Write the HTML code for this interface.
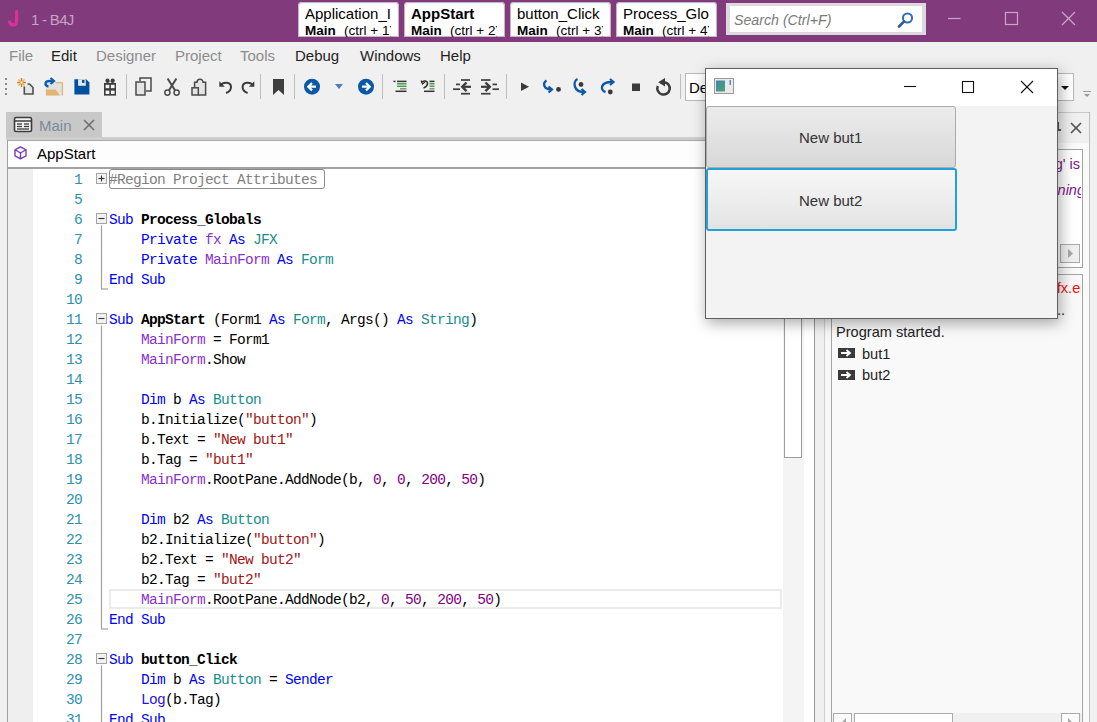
<!DOCTYPE html>
<html><head><meta charset="utf-8"><style>
html,body{margin:0;padding:0;}
body{width:1097px;height:722px;overflow:hidden;position:relative;background:#f0f0f0;font-family:'Liberation Sans', sans-serif;}
.b{position:absolute;}
.t{position:absolute;white-space:nowrap;}
</style></head><body>
<div class="b" style="left:0px;top:0px;width:1097px;height:42px;background:#813b7c;"></div><svg class="b" style="left:0;top:0" width="28" height="40"><path d="M16.6 11.5 V20.5 C16.6 26.2 10.8 26.2 9.6 22" fill="none" stroke="#dc2f9a" stroke-width="3.2" stroke-linecap="round"/></svg><div class="t" style="left:31px;top:10.30px;font-size:15px;line-height:19px;color:#c8a3c6;letter-spacing:-0.7px;">1 - B4J</div><div class="b" style="left:298px;top:2px;width:101px;height:35px;background:#fff;border-radius:4px 4px 1px 1px;box-shadow:inset 0 0 1px 1px #bdb0bd;overflow:hidden;"><div class="b" style="left:0;top:0;width:93px;height:36px;overflow:hidden;"><div class="t" style="left:7px;top:2.30px;font-size:15px;line-height:19px;color:#000;">Application_I</div><div class="t" style="left:7px;top:19.82px;font-size:13.5px;line-height:17px;color:#000;font-weight:bold;">Main</div><div class="t" style="left:46px;top:19.82px;font-size:13.5px;line-height:17px;color:#000;">(ctrl + 1)</div></div></div><div class="b" style="left:404px;top:2px;width:101px;height:35px;background:#fff;border-radius:4px 4px 1px 1px;box-shadow:inset 0 0 1px 1px #bdb0bd;overflow:hidden;"><div class="b" style="left:0;top:0;width:93px;height:36px;overflow:hidden;"><div class="t" style="left:7px;top:2.30px;font-size:15px;line-height:19px;color:#000;font-weight:bold;">AppStart</div><div class="t" style="left:7px;top:19.82px;font-size:13.5px;line-height:17px;color:#000;font-weight:bold;">Main</div><div class="t" style="left:46px;top:19.82px;font-size:13.5px;line-height:17px;color:#000;">(ctrl + 2)</div></div></div><div class="b" style="left:510px;top:2px;width:101px;height:35px;background:#fff;border-radius:4px 4px 1px 1px;box-shadow:inset 0 0 1px 1px #bdb0bd;overflow:hidden;"><div class="b" style="left:0;top:0;width:93px;height:36px;overflow:hidden;"><div class="t" style="left:7px;top:2.30px;font-size:15px;line-height:19px;color:#000;">button_Click</div><div class="t" style="left:7px;top:19.82px;font-size:13.5px;line-height:17px;color:#000;font-weight:bold;">Main</div><div class="t" style="left:46px;top:19.82px;font-size:13.5px;line-height:17px;color:#000;">(ctrl + 3)</div></div></div><div class="b" style="left:616px;top:2px;width:101px;height:35px;background:#fff;border-radius:4px 4px 1px 1px;box-shadow:inset 0 0 1px 1px #bdb0bd;overflow:hidden;"><div class="b" style="left:0;top:0;width:93px;height:36px;overflow:hidden;"><div class="t" style="left:7px;top:2.30px;font-size:15px;line-height:19px;color:#000;">Process_Glob</div><div class="t" style="left:7px;top:19.82px;font-size:13.5px;line-height:17px;color:#000;font-weight:bold;">Main</div><div class="t" style="left:46px;top:19.82px;font-size:13.5px;line-height:17px;color:#000;">(ctrl + 4)</div></div></div><div class="b" style="left:726px;top:3px;width:200px;height:32px;background:#dcd8e0;"></div><div class="b" style="left:730px;top:6px;width:192px;height:26px;background:#fff;"></div><div class="t" style="left:734px;top:11.08px;font-size:14.2px;line-height:18px;color:#7a7a7a;font-style:italic;">Search (Ctrl+F)</div><svg class="b" style="left:896px;top:11px" width="20" height="18" viewBox="0 0 20 18">
<circle cx="11.5" cy="7" r="4.6" fill="none" stroke="#2f6db5" stroke-width="2"/>
<line x1="8.2" y1="10.3" x2="3" y2="15.5" stroke="#2a5d9a" stroke-width="2.6" stroke-linecap="round"/></svg><svg class="b" style="left:940px;top:5px" width="157" height="30" viewBox="0 0 157 30">
<line x1="8" y1="13.5" x2="20.5" y2="13.5" stroke="#c9a5c8" stroke-width="1.2"/>
<rect x="65.5" y="7.5" width="12" height="12" fill="none" stroke="#c9a5c8" stroke-width="1.2"/>
<line x1="122" y1="7" x2="135" y2="20" stroke="#c9a5c8" stroke-width="1.2"/>
<line x1="135" y1="7" x2="122" y2="20" stroke="#c9a5c8" stroke-width="1.2"/>
</svg><div class="t" style="left:9px;top:46.30px;font-size:15px;line-height:19px;color:#8c8c8c;">File</div><div class="t" style="left:51px;top:46.30px;font-size:15px;line-height:19px;color:#1e1e1e;">Edit</div><div class="t" style="left:96px;top:46.30px;font-size:15px;line-height:19px;color:#8c8c8c;">Designer</div><div class="t" style="left:175px;top:46.30px;font-size:15px;line-height:19px;color:#8c8c8c;">Project</div><div class="t" style="left:240px;top:46.30px;font-size:15px;line-height:19px;color:#8c8c8c;">Tools</div><div class="t" style="left:295px;top:46.30px;font-size:15px;line-height:19px;color:#1e1e1e;">Debug</div><div class="t" style="left:360px;top:46.30px;font-size:15px;line-height:19px;color:#1e1e1e;">Windows</div><div class="t" style="left:440px;top:46.30px;font-size:15px;line-height:19px;color:#1e1e1e;">Help</div><svg class="b" style="left:0;top:0" width="720" height="106" viewBox="0 0 720 106"><rect x="5" y="78" width="2" height="2" fill="#8a8a8a"/><rect x="5" y="83" width="2" height="2" fill="#8a8a8a"/><rect x="5" y="88" width="2" height="2" fill="#8a8a8a"/><rect x="5" y="93" width="2" height="2" fill="#8a8a8a"/><g stroke="#d4861a" stroke-width="1.5"><line x1="21.5" y1="78" x2="21.5" y2="87"/><line x1="17" y1="82.5" x2="26" y2="82.5"/></g><g stroke="#e0a860" stroke-width="1.2"><line x1="18.5" y1="79.5" x2="24.5" y2="85.5"/><line x1="24.5" y1="79.5" x2="18.5" y2="85.5"/></g><circle cx="21.5" cy="82.5" r="1" fill="#fff"/><path d="M24.3 86.5 V94 H33 V87.5 L29.5 84 H27.5" fill="#e6e6e6" stroke="#505050" stroke-width="1.6"/><rect x="45.5" y="82.5" width="17" height="13" fill="#e2e2e2"/><path d="M55.5 82.6 H62.4 V95.5" fill="none" stroke="#e2b878" stroke-width="1.3"/><path d="M46 89.5 H55.5 L60 95.6 H46 Z" fill="#e3b56e"/><path d="M48.5 86.6 C44 85.5 44.5 81 50 81 H52.5" fill="none" stroke="#0a5cb0" stroke-width="2.3"/><path d="M50.5 78 L54 81 L50.5 84" fill="none" stroke="#0a5cb0" stroke-width="2.2"/><path d="M74.4 79.2 H86.2 L89.4 82.6 V94.4 H74.4 Z" fill="#0050a0"/><rect x="78.1" y="79.2" width="7.7" height="6.6" fill="#e6e6e6"/><rect x="82" y="80" width="2.5" height="2.9" fill="#0050a0"/><rect x="104" y="83" width="12" height="12.6" fill="#3c3c3c"/><g fill="#f4f4f4"><rect x="105.6" y="84.8" width="3.7" height="3.4"/><rect x="110.9" y="84.8" width="3.7" height="3.4"/><rect x="105.6" y="90.6" width="3.7" height="3.4"/><rect x="110.9" y="90.6" width="3.7" height="3.4"/></g><circle cx="107.6" cy="80.7" r="2.2" fill="#3c3c3c"/><circle cx="112.6" cy="80.7" r="2.2" fill="#3c3c3c"/><circle cx="110.1" cy="79.5" r="0.9" fill="#f0f0f0"/><line x1="126.5" y1="74" x2="126.5" y2="99" stroke="#bdbdbd" stroke-width="1"/><line x1="260.5" y1="74" x2="260.5" y2="99" stroke="#bdbdbd" stroke-width="1"/><line x1="294.5" y1="74" x2="294.5" y2="99" stroke="#bdbdbd" stroke-width="1"/><line x1="382.5" y1="74" x2="382.5" y2="99" stroke="#bdbdbd" stroke-width="1"/><line x1="444.5" y1="74" x2="444.5" y2="99" stroke="#bdbdbd" stroke-width="1"/><line x1="506.5" y1="74" x2="506.5" y2="99" stroke="#bdbdbd" stroke-width="1"/><line x1="680.5" y1="74" x2="680.5" y2="99" stroke="#bdbdbd" stroke-width="1"/><rect x="136" y="82" width="9" height="13" fill="#e4e4e4" stroke="#4a4a4a" stroke-width="1.5"/><path d="M140 81 V78 H151 V91 H146" fill="none" stroke="#4a4a4a" stroke-width="1.5"/><g fill="none" stroke="#4a4a4a"><path d="M167.6 78.5 L175 90.3" stroke-width="2"/><path d="M176.4 78.5 L169 90.3" stroke-width="2"/><circle cx="167.4" cy="92.6" r="2.6" stroke-width="1.5"/><circle cx="176.6" cy="92.6" r="2.6" stroke-width="1.5"/></g><path d="M194.6 87 V82.2 H197 A3 3 0 0 1 203 82.2 H205.6 V95 H198.5" fill="#e4e4e4" stroke="#4a4a4a" stroke-width="1.5"/><rect x="192" y="87.8" width="6.3" height="7.2" fill="#e4e4e4" stroke="#4a4a4a" stroke-width="1.5"/><circle cx="200" cy="81.6" r="1" fill="#f0f0f0"/><path d="M220.5 85.5 C223 81.5 231 81.5 231 87 C231 90 229 92 226 93" fill="none" stroke="#3a3a3a" stroke-width="2"/><path d="M219.3 81.3 V86.8 H224.8 Z" fill="#3a3a3a"/><path d="M253.1 85.5 C250.6 81.5 242.6 81.5 242.6 87 C242.6 90 244.6 92 247.6 93" fill="none" stroke="#3a3a3a" stroke-width="2"/><path d="M254.3 81.3 V86.8 H248.8 Z" fill="#3a3a3a"/><path d="M273 79 H284 V95 L278.5 90 L273 95 Z" fill="#3f3f3f"/><circle cx="312" cy="86.7" r="8" fill="#0a58a8"/><path d="M316 86.7 H309 M312 83 L308.3 86.7 L312 90.4" fill="none" stroke="#fff" stroke-width="2.2"/><path d="M335 84 H343 L339 89 Z" fill="#4b7fc0"/><circle cx="366" cy="86.7" r="8" fill="#0a58a8"/><path d="M362 86.7 H369 M366 83 L369.7 86.7 L366 90.4" fill="none" stroke="#fff" stroke-width="2.2"/><g stroke-width="1.5"><line x1="393.5" y1="81.4" x2="395.5" y2="81.4" stroke="#333"/><line x1="397" y1="81.4" x2="406.5" y2="81.4" stroke="#333"/><line x1="397" y1="83.8" x2="406.5" y2="83.8" stroke="#46a046"/><line x1="397" y1="86.3" x2="406.5" y2="86.3" stroke="#46a046"/><line x1="400" y1="88.8" x2="406.5" y2="88.8" stroke="#8a8a8a"/><line x1="395.5" y1="91.3" x2="406.5" y2="91.3" stroke="#333"/></g><path d="M422 82.5 C423 80 428 80.5 427.5 84 C427 86 425 87.5 423.5 88" fill="none" stroke="#333" stroke-width="1.5"/><path d="M421 80.5 L422.5 84 L425 82" fill="none" stroke="#333" stroke-width="1.2"/><g stroke-width="1.5"><line x1="429.5" y1="81.4" x2="434.5" y2="81.4" stroke="#333"/><line x1="429.5" y1="83.8" x2="434.5" y2="83.8" stroke="#46a046"/><line x1="429.5" y1="86.3" x2="434.5" y2="86.3" stroke="#46a046"/><line x1="429.5" y1="88.8" x2="434.5" y2="88.8" stroke="#8a8a8a"/><line x1="424" y1="91.3" x2="434.5" y2="91.3" stroke="#333"/></g><g stroke="#3d3d3d" stroke-width="1.7" fill="none"><line x1="461" y1="80" x2="470" y2="80"/><line x1="461" y1="93.7" x2="470" y2="93.7"/><line x1="456" y1="84.4" x2="460" y2="84.4"/><line x1="453" y1="89.2" x2="460" y2="89.2"/><line x1="462" y1="86.8" x2="471" y2="86.8" stroke-width="2.2"/><path d="M466.5 82.5 L462.2 86.8 L466.5 91.1" stroke-width="2.4"/></g><g stroke="#3d3d3d" stroke-width="1.7" fill="none"><line x1="481" y1="80" x2="490.5" y2="80"/><line x1="481" y1="93.7" x2="490.5" y2="93.7"/><line x1="492.5" y1="84.4" x2="497" y2="84.4"/><line x1="492.5" y1="89.2" x2="499" y2="89.2"/><line x1="481" y1="86.8" x2="490" y2="86.8" stroke-width="2.2"/><path d="M485.5 82.5 L489.8 86.8 L485.5 91.1" stroke-width="2.4"/></g><path d="M521 82.5 L529 86.7 L521 91 Z" fill="#3a3a3a"/><path d="M546.5 80.5 C542.5 83 543.5 89.5 551 89.5" fill="none" stroke="#0a58a8" stroke-width="2.4"/><path d="M548.5 86.5 L552 89.5 L548.5 92.5" fill="none" stroke="#0a58a8" stroke-width="2.2"/><circle cx="558.5" cy="89.4" r="2.4" fill="#3a3a3a"/><path d="M577.5 79 C572.5 81.5 573.5 92 583.5 92" fill="none" stroke="#0a58a8" stroke-width="2.4"/><path d="M581.5 89 L585 92 L581.5 95" fill="none" stroke="#0a58a8" stroke-width="2.2"/><circle cx="581" cy="84.5" r="2.4" fill="#3a3a3a"/><path d="M605.5 92 C600 90 600 82 612 82" fill="none" stroke="#0a58a8" stroke-width="2.4"/><path d="M610 79 L613.5 82 L610 85" fill="none" stroke="#0a58a8" stroke-width="2.2"/><circle cx="610.3" cy="92" r="2.4" fill="#3a3a3a"/><rect x="632" y="83.5" width="8" height="7.5" fill="#3a3a3a"/><path d="M657.8 86 A6.2 6.2 0 1 0 664 82.2" fill="none" stroke="#3a3a3a" stroke-width="2.5"/><path d="M665 78 L658.2 82.2 L665 86.4 Z" fill="#3a3a3a"/></svg><div class="b" style="left:685px;top:73px;width:389px;height:28px;background:#fff;box-shadow:0 0 0 1px #b9b9b9 inset;"></div><div class="t" style="left:689px;top:77.80px;font-size:15px;line-height:19px;color:#000;">Default</div><svg class="b" style="left:1058px;top:82px" width="39" height="16"><path d="M3 4 H11 L7 8 Z" fill="#111"/><g stroke="#9a9a9a" stroke-width="1"><line x1="25" y1="9.5" x2="33" y2="9.5"/></g><path d="M26 12 H32 L29 15 Z" fill="#9a9a9a"/></svg><div class="b" style="left:6px;top:112px;width:96px;height:25px;background:#c8c8c8;"></div><svg class="b" style="left:13px;top:116px" width="21" height="18"><rect x="1.5" y="1.5" width="17" height="14" rx="1.5" fill="#f2f2f2" stroke="#3c3c3c" stroke-width="1.6"/><line x1="2" y1="5" x2="18" y2="5" stroke="#3c3c3c" stroke-width="1.5"/><g stroke="#3c3c3c" stroke-width="1.3"><line x1="4" y1="8" x2="9" y2="8"/><line x1="11" y1="8" x2="16" y2="8"/><line x1="4" y1="10.5" x2="9" y2="10.5"/><line x1="11" y1="10.5" x2="16" y2="10.5"/><line x1="4" y1="13" x2="16" y2="13"/></g></svg><div class="t" style="left:39px;top:116.30px;font-size:15px;line-height:19px;color:#7c8a99;">Main</div><svg class="b" style="left:82px;top:118px" width="14" height="14"><g stroke="#6e6e6e" stroke-width="1.6"><line x1="2" y1="2" x2="12" y2="12"/><line x1="12" y1="2" x2="2" y2="12"/></g></svg><div class="b" style="left:6px;top:137px;width:808px;height:3px;background:#cecece;"></div><div class="b" style="left:7px;top:140px;width:807px;height:29px;background:#fdfdfd;"></div><div class="b" style="left:7px;top:140px;width:807px;height:1px;background:#a8a8a8;"></div><div class="b" style="left:7px;top:140px;width:1px;height:582px;background:#a0a0a0;"></div><div class="b" style="left:7px;top:167px;width:807px;height:2px;background:#a2a2a2;"></div><svg class="b" style="left:13px;top:145px" width="16" height="16"><path d="M7.5 1.8 L13 4.8 V10.8 L7.5 13.8 L2 10.8 V4.8 Z M2.5 5 L7.5 8 L12.5 5 M7.5 8 V13.8" fill="none" stroke="#7b3fb3" stroke-width="1.4" stroke-linejoin="round"/></svg><div class="t" style="left:37px;top:144.30px;font-size:15px;line-height:19px;color:#000;">AppStart</div><div class="b" style="left:8px;top:169px;width:25px;height:553px;background:#efefef;"></div><div class="b" style="left:33px;top:169px;width:750px;height:553px;background:#fff;"></div><div class="b" style="left:783px;top:169px;width:21px;height:553px;background:#f4f4f4;"></div><div class="b" style="left:784px;top:169px;width:18px;height:289px;background:#fff;box-shadow:0 0 0 1px #9c9c9c inset;"></div><div class="b" style="left:804px;top:140px;width:10px;height:582px;background:#fff;"></div><div class="b" style="left:814px;top:106px;width:1px;height:616px;background:#9a9a9a;"></div><div class="b" style="left:815px;top:106px;width:9px;height:616px;background:#f0f0f0;"></div><div class="b" style="left:824px;top:106px;width:1px;height:616px;background:#cfcfcf;"></div><div class="b" style="left:825px;top:106px;width:6px;height:616px;background:#f8f8f8;"></div><div class="b" style="left:109px;top:589px;width:673px;height:20px;box-shadow:0 0 0 2px #ebebeb inset;"></div><div class="t" style="left:33px;width:49px;text-align:right;top:170.14px;font-family:'Liberation Mono', monospace;font-size:14.5px;line-height:20px;color:#2b91af;letter-spacing:-0.70px;">1</div><div class="t" style="left:109px;top:170.14px;font-family:'Liberation Mono', monospace;font-size:14.5px;line-height:20px;letter-spacing:-0.70px;white-space:pre;"><span style="color:#808080;">#Region Project Attributes</span></div><div class="t" style="left:33px;width:49px;text-align:right;top:190.14px;font-family:'Liberation Mono', monospace;font-size:14.5px;line-height:20px;color:#2b91af;letter-spacing:-0.70px;">5</div><div class="t" style="left:33px;width:49px;text-align:right;top:210.14px;font-family:'Liberation Mono', monospace;font-size:14.5px;line-height:20px;color:#2b91af;letter-spacing:-0.70px;">6</div><div class="t" style="left:109px;top:210.14px;font-family:'Liberation Mono', monospace;font-size:14.5px;line-height:20px;letter-spacing:-0.70px;white-space:pre;"><span style="color:#0000ff;">Sub </span><span style="color:#000;font-weight:bold;">Process_Globals</span></div><div class="t" style="left:33px;width:49px;text-align:right;top:230.14px;font-family:'Liberation Mono', monospace;font-size:14.5px;line-height:20px;color:#2b91af;letter-spacing:-0.70px;">7</div><div class="t" style="left:109px;top:230.14px;font-family:'Liberation Mono', monospace;font-size:14.5px;line-height:20px;letter-spacing:-0.70px;white-space:pre;"><span style="color:#000;">    </span><span style="color:#0000ff;">Private </span><span style="color:#8a30cf;">fx </span><span style="color:#0000ff;">As </span><span style="color:#178d8d;">JFX</span></div><div class="t" style="left:33px;width:49px;text-align:right;top:250.14px;font-family:'Liberation Mono', monospace;font-size:14.5px;line-height:20px;color:#2b91af;letter-spacing:-0.70px;">8</div><div class="t" style="left:109px;top:250.14px;font-family:'Liberation Mono', monospace;font-size:14.5px;line-height:20px;letter-spacing:-0.70px;white-space:pre;"><span style="color:#000;">    </span><span style="color:#0000ff;">Private </span><span style="color:#8a30cf;">MainForm </span><span style="color:#0000ff;">As </span><span style="color:#178d8d;">Form</span></div><div class="t" style="left:33px;width:49px;text-align:right;top:270.14px;font-family:'Liberation Mono', monospace;font-size:14.5px;line-height:20px;color:#2b91af;letter-spacing:-0.70px;">9</div><div class="t" style="left:109px;top:270.14px;font-family:'Liberation Mono', monospace;font-size:14.5px;line-height:20px;letter-spacing:-0.70px;white-space:pre;"><span style="color:#0000ff;">End Sub</span></div><div class="t" style="left:33px;width:49px;text-align:right;top:290.14px;font-family:'Liberation Mono', monospace;font-size:14.5px;line-height:20px;color:#2b91af;letter-spacing:-0.70px;">10</div><div class="t" style="left:33px;width:49px;text-align:right;top:310.14px;font-family:'Liberation Mono', monospace;font-size:14.5px;line-height:20px;color:#2b91af;letter-spacing:-0.70px;">11</div><div class="t" style="left:109px;top:310.14px;font-family:'Liberation Mono', monospace;font-size:14.5px;line-height:20px;letter-spacing:-0.70px;white-space:pre;"><span style="color:#0000ff;">Sub </span><span style="color:#000;font-weight:bold;">AppStart</span><span style="color:#000;"> (Form1 </span><span style="color:#0000ff;">As </span><span style="color:#178d8d;">Form</span><span style="color:#000;">, Args() </span><span style="color:#0000ff;">As </span><span style="color:#178d8d;">String</span><span style="color:#000;">)</span></div><div class="t" style="left:33px;width:49px;text-align:right;top:330.14px;font-family:'Liberation Mono', monospace;font-size:14.5px;line-height:20px;color:#2b91af;letter-spacing:-0.70px;">12</div><div class="t" style="left:109px;top:330.14px;font-family:'Liberation Mono', monospace;font-size:14.5px;line-height:20px;letter-spacing:-0.70px;white-space:pre;"><span style="color:#000;">    </span><span style="color:#8a30cf;">MainForm</span><span style="color:#000;"> = Form1</span></div><div class="t" style="left:33px;width:49px;text-align:right;top:350.14px;font-family:'Liberation Mono', monospace;font-size:14.5px;line-height:20px;color:#2b91af;letter-spacing:-0.70px;">13</div><div class="t" style="left:109px;top:350.14px;font-family:'Liberation Mono', monospace;font-size:14.5px;line-height:20px;letter-spacing:-0.70px;white-space:pre;"><span style="color:#000;">    </span><span style="color:#8a30cf;">MainForm</span><span style="color:#000;">.Show</span></div><div class="t" style="left:33px;width:49px;text-align:right;top:370.14px;font-family:'Liberation Mono', monospace;font-size:14.5px;line-height:20px;color:#2b91af;letter-spacing:-0.70px;">14</div><div class="t" style="left:33px;width:49px;text-align:right;top:390.14px;font-family:'Liberation Mono', monospace;font-size:14.5px;line-height:20px;color:#2b91af;letter-spacing:-0.70px;">15</div><div class="t" style="left:109px;top:390.14px;font-family:'Liberation Mono', monospace;font-size:14.5px;line-height:20px;letter-spacing:-0.70px;white-space:pre;"><span style="color:#000;">    </span><span style="color:#0000ff;">Dim </span><span style="color:#000;">b </span><span style="color:#0000ff;">As </span><span style="color:#178d8d;">Button</span></div><div class="t" style="left:33px;width:49px;text-align:right;top:410.14px;font-family:'Liberation Mono', monospace;font-size:14.5px;line-height:20px;color:#2b91af;letter-spacing:-0.70px;">16</div><div class="t" style="left:109px;top:410.14px;font-family:'Liberation Mono', monospace;font-size:14.5px;line-height:20px;letter-spacing:-0.70px;white-space:pre;"><span style="color:#000;">    b.Initialize(</span><span style="color:#a31515;">&quot;button&quot;</span><span style="color:#000;">)</span></div><div class="t" style="left:33px;width:49px;text-align:right;top:430.14px;font-family:'Liberation Mono', monospace;font-size:14.5px;line-height:20px;color:#2b91af;letter-spacing:-0.70px;">17</div><div class="t" style="left:109px;top:430.14px;font-family:'Liberation Mono', monospace;font-size:14.5px;line-height:20px;letter-spacing:-0.70px;white-space:pre;"><span style="color:#000;">    b.Text = </span><span style="color:#a31515;">&quot;New but1&quot;</span></div><div class="t" style="left:33px;width:49px;text-align:right;top:450.14px;font-family:'Liberation Mono', monospace;font-size:14.5px;line-height:20px;color:#2b91af;letter-spacing:-0.70px;">18</div><div class="t" style="left:109px;top:450.14px;font-family:'Liberation Mono', monospace;font-size:14.5px;line-height:20px;letter-spacing:-0.70px;white-space:pre;"><span style="color:#000;">    b.Tag = </span><span style="color:#a31515;">&quot;but1&quot;</span></div><div class="t" style="left:33px;width:49px;text-align:right;top:470.14px;font-family:'Liberation Mono', monospace;font-size:14.5px;line-height:20px;color:#2b91af;letter-spacing:-0.70px;">19</div><div class="t" style="left:109px;top:470.14px;font-family:'Liberation Mono', monospace;font-size:14.5px;line-height:20px;letter-spacing:-0.70px;white-space:pre;"><span style="color:#000;">    </span><span style="color:#8a30cf;">MainForm</span><span style="color:#000;">.RootPane.AddNode(b, </span><span style="color:#800080;">0</span><span style="color:#000;">, </span><span style="color:#800080;">0</span><span style="color:#000;">, </span><span style="color:#800080;">200</span><span style="color:#000;">, </span><span style="color:#800080;">50</span><span style="color:#000;">)</span></div><div class="t" style="left:33px;width:49px;text-align:right;top:490.14px;font-family:'Liberation Mono', monospace;font-size:14.5px;line-height:20px;color:#2b91af;letter-spacing:-0.70px;">20</div><div class="t" style="left:33px;width:49px;text-align:right;top:510.14px;font-family:'Liberation Mono', monospace;font-size:14.5px;line-height:20px;color:#2b91af;letter-spacing:-0.70px;">21</div><div class="t" style="left:109px;top:510.14px;font-family:'Liberation Mono', monospace;font-size:14.5px;line-height:20px;letter-spacing:-0.70px;white-space:pre;"><span style="color:#000;">    </span><span style="color:#0000ff;">Dim </span><span style="color:#000;">b2 </span><span style="color:#0000ff;">As </span><span style="color:#178d8d;">Button</span></div><div class="t" style="left:33px;width:49px;text-align:right;top:530.14px;font-family:'Liberation Mono', monospace;font-size:14.5px;line-height:20px;color:#2b91af;letter-spacing:-0.70px;">22</div><div class="t" style="left:109px;top:530.14px;font-family:'Liberation Mono', monospace;font-size:14.5px;line-height:20px;letter-spacing:-0.70px;white-space:pre;"><span style="color:#000;">    b2.Initialize(</span><span style="color:#a31515;">&quot;button&quot;</span><span style="color:#000;">)</span></div><div class="t" style="left:33px;width:49px;text-align:right;top:550.14px;font-family:'Liberation Mono', monospace;font-size:14.5px;line-height:20px;color:#2b91af;letter-spacing:-0.70px;">23</div><div class="t" style="left:109px;top:550.14px;font-family:'Liberation Mono', monospace;font-size:14.5px;line-height:20px;letter-spacing:-0.70px;white-space:pre;"><span style="color:#000;">    b2.Text = </span><span style="color:#a31515;">&quot;New but2&quot;</span></div><div class="t" style="left:33px;width:49px;text-align:right;top:570.14px;font-family:'Liberation Mono', monospace;font-size:14.5px;line-height:20px;color:#2b91af;letter-spacing:-0.70px;">24</div><div class="t" style="left:109px;top:570.14px;font-family:'Liberation Mono', monospace;font-size:14.5px;line-height:20px;letter-spacing:-0.70px;white-space:pre;"><span style="color:#000;">    b2.Tag = </span><span style="color:#a31515;">&quot;but2&quot;</span></div><div class="t" style="left:33px;width:49px;text-align:right;top:590.14px;font-family:'Liberation Mono', monospace;font-size:14.5px;line-height:20px;color:#2b91af;letter-spacing:-0.70px;">25</div><div class="t" style="left:109px;top:590.14px;font-family:'Liberation Mono', monospace;font-size:14.5px;line-height:20px;letter-spacing:-0.70px;white-space:pre;"><span style="color:#000;">    </span><span style="color:#8a30cf;">MainForm</span><span style="color:#000;">.RootPane.AddNode(b2, </span><span style="color:#800080;">0</span><span style="color:#000;">, </span><span style="color:#800080;">50</span><span style="color:#000;">, </span><span style="color:#800080;">200</span><span style="color:#000;">, </span><span style="color:#800080;">50</span><span style="color:#000;">)</span></div><div class="t" style="left:33px;width:49px;text-align:right;top:610.14px;font-family:'Liberation Mono', monospace;font-size:14.5px;line-height:20px;color:#2b91af;letter-spacing:-0.70px;">26</div><div class="t" style="left:109px;top:610.14px;font-family:'Liberation Mono', monospace;font-size:14.5px;line-height:20px;letter-spacing:-0.70px;white-space:pre;"><span style="color:#0000ff;">End Sub</span></div><div class="t" style="left:33px;width:49px;text-align:right;top:630.14px;font-family:'Liberation Mono', monospace;font-size:14.5px;line-height:20px;color:#2b91af;letter-spacing:-0.70px;">27</div><div class="t" style="left:33px;width:49px;text-align:right;top:650.14px;font-family:'Liberation Mono', monospace;font-size:14.5px;line-height:20px;color:#2b91af;letter-spacing:-0.70px;">28</div><div class="t" style="left:109px;top:650.14px;font-family:'Liberation Mono', monospace;font-size:14.5px;line-height:20px;letter-spacing:-0.70px;white-space:pre;"><span style="color:#0000ff;">Sub </span><span style="color:#000;font-weight:bold;">button_Click</span></div><div class="t" style="left:33px;width:49px;text-align:right;top:670.14px;font-family:'Liberation Mono', monospace;font-size:14.5px;line-height:20px;color:#2b91af;letter-spacing:-0.70px;">29</div><div class="t" style="left:109px;top:670.14px;font-family:'Liberation Mono', monospace;font-size:14.5px;line-height:20px;letter-spacing:-0.70px;white-space:pre;"><span style="color:#000;">    </span><span style="color:#0000ff;">Dim </span><span style="color:#000;">b </span><span style="color:#0000ff;">As </span><span style="color:#178d8d;">Button</span><span style="color:#000;"> = </span><span style="color:#0000ff;">Sender</span></div><div class="t" style="left:33px;width:49px;text-align:right;top:690.14px;font-family:'Liberation Mono', monospace;font-size:14.5px;line-height:20px;color:#2b91af;letter-spacing:-0.70px;">30</div><div class="t" style="left:109px;top:690.14px;font-family:'Liberation Mono', monospace;font-size:14.5px;line-height:20px;letter-spacing:-0.70px;white-space:pre;"><span style="color:#000;">    </span><span style="color:#2b10e0;">Log</span><span style="color:#000;">(b.Tag)</span></div><div class="t" style="left:33px;width:49px;text-align:right;top:710.14px;font-family:'Liberation Mono', monospace;font-size:14.5px;line-height:20px;color:#2b91af;letter-spacing:-0.70px;">31</div><div class="t" style="left:109px;top:710.14px;font-family:'Liberation Mono', monospace;font-size:14.5px;line-height:20px;letter-spacing:-0.70px;white-space:pre;"><span style="color:#0000ff;">End Sub</span></div><div class="b" style="left:109px;top:169px;width:216px;height:20px;border:1px solid #8a8a8a;border-radius:3px;box-sizing:border-box;"></div><svg class="b" style="left:0;top:0" width="120" height="722"><rect x="96.5" y="173.5" width="10" height="10" fill="#f2f2f2" stroke="#a4a4a4" stroke-width="1"/><line x1="98.5" y1="178.5" x2="104.5" y2="178.5" stroke="#333" stroke-width="1.1"/><line x1="101.5" y1="175.5" x2="101.5" y2="181.5" stroke="#333" stroke-width="1.1"/><rect x="96.5" y="213.5" width="10" height="10" fill="#f2f2f2" stroke="#a4a4a4" stroke-width="1"/><line x1="98.5" y1="218.5" x2="104.5" y2="218.5" stroke="#333" stroke-width="1.1"/><line x1="101.5" y1="225.5" x2="101.5" y2="289" stroke="#a0a0a0" stroke-width="1.2"/><line x1="101" y1="289" x2="108" y2="289" stroke="#a0a0a0" stroke-width="1.2"/><rect x="96.5" y="313.5" width="10" height="10" fill="#f2f2f2" stroke="#a4a4a4" stroke-width="1"/><line x1="98.5" y1="318.5" x2="104.5" y2="318.5" stroke="#333" stroke-width="1.1"/><line x1="101.5" y1="325.5" x2="101.5" y2="629" stroke="#a0a0a0" stroke-width="1.2"/><line x1="101" y1="629" x2="108" y2="629" stroke="#a0a0a0" stroke-width="1.2"/><rect x="96.5" y="653.5" width="10" height="10" fill="#f2f2f2" stroke="#a4a4a4" stroke-width="1"/><line x1="98.5" y1="658.5" x2="104.5" y2="658.5" stroke="#333" stroke-width="1.1"/><line x1="101.5" y1="665.5" x2="101.5" y2="729" stroke="#a0a0a0" stroke-width="1.2"/><line x1="101" y1="729" x2="108" y2="729" stroke="#a0a0a0" stroke-width="1.2"/></svg><div class="b" style="left:831px;top:112px;width:259px;height:610px;background:#fafafa;"></div><div class="b" style="left:831px;top:112px;width:258px;height:31px;background:#f0f0f0;"></div><div class="b" style="left:1089px;top:112px;width:1px;height:610px;background:#bdbdbd;"></div><div class="b" style="left:831px;top:112px;width:258px;height:1px;background:#c8c8c8;"></div><div class="b" style="left:1090px;top:100px;width:7px;height:622px;background:#f0f0f0;"></div><svg class="b" style="left:1052px;top:118px" width="34" height="20"><path d="M6 4 V12 M3 12 H9" stroke="#555" stroke-width="2" fill="none"/><g stroke="#555" stroke-width="1.7"><line x1="19" y1="5" x2="29" y2="15"/><line x1="29" y1="5" x2="19" y2="15"/></g></svg><div class="b" style="left:831px;top:149px;width:252px;height:119px;background:#fff;border:1px solid #a4a4a4;box-sizing:border-box;"></div><div class="b" style="left:834px;top:150px;width:247px;height:117px;overflow:hidden;"><div class="t" style="right:1px;top:4px;font-size:14.5px;line-height:20px;color:#7d1a8f;">Variable &#39;unusing&#39; is</div><div class="t" style="right:-4px;top:30px;font-size:14.5px;line-height:20px;color:#7d1a8f;font-style:italic;">Unused warning</div></div><svg class="b" style="left:1060px;top:244px" width="21" height="20"><rect x="0.5" y="0.5" width="19" height="18" fill="#f0f0f0" stroke="#ababab"/><path d="M8 5 L13 9.5 L8 14 Z" fill="#a8a8a8"/></svg><div class="b" style="left:831px;top:274px;width:252px;height:448px;background:#f9f9f9;border:1px solid #a4a4a4;border-bottom:none;box-sizing:border-box;"></div><div class="b" style="left:834px;top:275px;width:247px;height:60px;overflow:hidden;"><div class="t" style="right:-22px;top:3px;font-size:14.6px;line-height:20px;color:#f01010;">javafx.error</div><div class="t" style="right:16px;top:25px;font-size:14.6px;line-height:20px;color:#222;">Compiling...</div></div><div class="t" style="left:836px;top:322.94px;font-size:14.6px;line-height:18px;color:#222;">Program started.</div><svg class="b" style="left:838px;top:348px" width="17" height="10"><rect x="0" y="0" width="17" height="10" fill="#3a3a3a"/><path d="M3 5 H11 M8.5 2 L12 5 L8.5 8" fill="none" stroke="#fff" stroke-width="1.8"/></svg><div class="t" style="left:862px;top:344.64px;font-size:14.6px;line-height:18px;color:#222;">but1</div><svg class="b" style="left:838px;top:370px" width="17" height="10"><rect x="0" y="0" width="17" height="10" fill="#3a3a3a"/><path d="M3 5 H11 M8.5 2 L12 5 L8.5 8" fill="none" stroke="#fff" stroke-width="1.8"/></svg><div class="t" style="left:862px;top:366.14px;font-size:14.6px;line-height:18px;color:#222;">but2</div><div class="b" style="left:832px;top:713px;width:250px;height:9px;background:#f0f0f0;"></div><div class="b" style="left:833px;top:713px;width:19px;height:12px;background:#fafafa;box-shadow:0 0 0 1px #ababab inset;"></div><div class="b" style="left:854px;top:713px;width:99px;height:12px;background:#fff;box-shadow:0 0 0 1px #ababab inset;"></div><div class="b" style="left:1061px;top:713px;width:19px;height:12px;background:#fafafa;box-shadow:0 0 0 1px #ababab inset;"></div><svg class="b" style="left:833px;top:713px" width="250" height="9"><path d="M13 5 L9 9 L13 13 Z" fill="#a8a8a8"/><path d="M235 5 L239 9 L235 13 Z" fill="#a8a8a8"/></svg><div class="b" style="left:705px;top:68px;width:353px;height:251px;box-shadow:2px 4px 14px rgba(0,0,0,0.35);"><div class="b" style="left:0px;top:0px;width:353px;height:251px;background:#f3f3f3;border:1px solid #606060;box-sizing:border-box;"></div><div class="b" style="left:1px;top:1px;width:351px;height:37px;background:#fff;"></div><svg class="b" style="left:9px;top:10px" width="21" height="17"><rect x="0.5" y="0.5" width="19" height="15" fill="#eaeaea" stroke="#9a9a9a"/><defs><linearGradient id="g1" x1="0" y1="0" x2="1" y2="1"><stop offset="0" stop-color="#4a7fb5"/><stop offset="1" stop-color="#46a86a"/></linearGradient></defs><rect x="2" y="2.5" width="9" height="11" fill="url(#g1)"/><rect x="15.5" y="2" width="1.5" height="5" fill="#4a8fc0"/></svg><svg class="b" style="left:190px;top:10px" width="160" height="20"><line x1="9" y1="8.5" x2="21" y2="8.5" stroke="#111" stroke-width="1.1"/><rect x="67.5" y="3.5" width="11" height="11" fill="none" stroke="#111" stroke-width="1.1"/><g stroke="#111" stroke-width="1.1"><line x1="126" y1="3" x2="138" y2="15"/><line x1="138" y1="3" x2="126" y2="15"/></g></svg><div class="b" style="left:1px;top:38px;width:250px;height:62px;background:linear-gradient(#ececec,#d8d8d8);border:1px solid #ababab;border-radius:3px;box-sizing:border-box;"></div><div class="b" style="left:1px;top:100px;width:251px;height:63px;background:linear-gradient(#f7f7f7,#e3e3e3);border:2px solid #1fa2da;border-radius:3px;box-sizing:border-box;"></div><div class="t" style="left:94px;top:60.30px;font-size:15px;line-height:19px;color:#333;">New but1</div><div class="t" style="left:94px;top:123.30px;font-size:15px;line-height:19px;color:#333;">New but2</div></div>
</body></html>
